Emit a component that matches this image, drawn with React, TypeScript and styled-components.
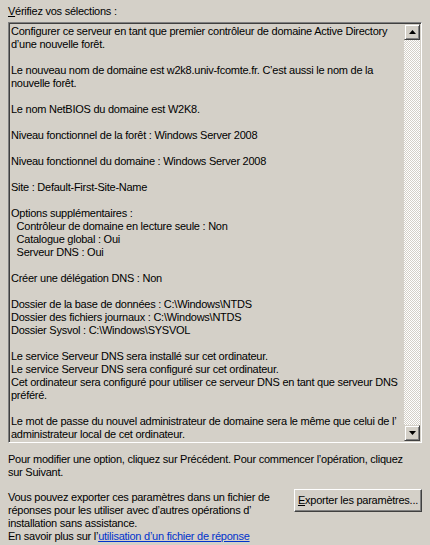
import React from "react";
import styled, { createGlobalStyle } from "styled-components";

const GlobalStyle = createGlobalStyle`
  html, body {
    margin: 0;
    background: #d4d0c8;
  }
  body {
    font-family: "Liberation Sans", Arial, sans-serif;
    font-size: 11px;
    color: #000;
  }
`;

const Dialog = styled.div`
  width: 430px;
  height: 545px;
  box-sizing: border-box;
  padding: 5px 8px 0;
  background: #d4d0c8;
  line-height: 13px;
  letter-spacing: -0.25px;
  overflow: hidden;
`;

const Heading = styled.div`
  margin-bottom: 4px;
  u {
    text-decoration: underline;
  }
`;

const SummaryBox = styled.div`
  display: flex;
  height: 421px;
  box-sizing: border-box;
  border-top: 1px solid #808080;
  border-left: 1px solid #808080;
  border-bottom: 1px solid #ffffff;
  border-right: 1px solid #ffffff;
  box-shadow: inset 1px 1px 0 #404040, inset -1px -1px 0 #d4d0c8;
  padding: 1px;
`;

const SummaryText = styled.div`
  flex: 1;
  overflow: hidden;
  white-space: pre;
  padding: 1px 0 0 1px;
`;

const Scrollbar = styled.div`
  width: 16px;
  display: flex;
  flex-direction: column;
`;

const ArrowButton = styled.div`
  width: 16px;
  height: 16px;
  box-sizing: border-box;
  background: #d4d0c8;
  border-top: 1px solid #d4d0c8;
  border-left: 1px solid #d4d0c8;
  border-bottom: 1px solid #404040;
  border-right: 1px solid #404040;
  box-shadow: inset 1px 1px 0 #ffffff, inset -1px -1px 0 #808080;
  display: flex;
  align-items: center;
  justify-content: center;
`;

const Track = styled.div`
  flex: 1;
  background: repeating-conic-gradient(#ffffff 0 25%, #d4d0c8 0 50%) 0 0 / 2px 2px;
`;

const Note = styled.p`
  margin: 10px 0 0;
  white-space: nowrap;
`;

const ExportRow = styled.div`
  display: flex;
  justify-content: space-between;
  align-items: flex-start;
  margin-top: 10px;
`;

const ExportText = styled.div`
  padding-top: 2px;
  white-space: nowrap;
`;

const Link = styled.a`
  color: #0033cc;
  text-decoration: underline;
  cursor: pointer;
`;

const Button = styled.button`
  font: inherit;
  letter-spacing: inherit;
  white-space: nowrap;
  color: #000;
  width: 128px;
  height: 23px;
  padding: 0;
  background: #d4d0c8;
  border-top: 1px solid #ffffff;
  border-left: 1px solid #ffffff;
  border-bottom: 1px solid #404040;
  border-right: 1px solid #404040;
  box-shadow: inset -1px -1px 0 #808080;
  cursor: pointer;
`;

const Arrow = ({ up }: { up?: boolean }) => (
  <svg width="7" height="4" viewBox="0 0 7 4">
    <path d={up ? "M3.5 0 L7 4 L0 4 Z" : "M0 0 L7 0 L3.5 4 Z"} fill="#000" />
  </svg>
);

const summary = [
  "Configurer ce serveur en tant que premier contrôleur de domaine Active Directory",
  "d’une nouvelle forêt.",
  "",
  "Le nouveau nom de domaine est w2k8.univ-fcomte.fr. C’est aussi le nom de la",
  "nouvelle forêt.",
  "",
  "Le nom NetBIOS du domaine est W2K8.",
  "",
  "Niveau fonctionnel de la forêt : Windows Server 2008",
  "",
  "Niveau fonctionnel du domaine : Windows Server 2008",
  "",
  "Site : Default-First-Site-Name",
  "",
  "Options supplémentaires :",
  "  Contrôleur de domaine en lecture seule : Non",
  "  Catalogue global : Oui",
  "  Serveur DNS : Oui",
  "",
  "Créer une délégation DNS : Non",
  "",
  "Dossier de la base de données : C:\\Windows\\NTDS",
  "Dossier des fichiers journaux : C:\\Windows\\NTDS",
  "Dossier Sysvol : C:\\Windows\\SYSVOL",
  "",
  "Le service Serveur DNS sera installé sur cet ordinateur.",
  "Le service Serveur DNS sera configuré sur cet ordinateur.",
  "Cet ordinateur sera configuré pour utiliser ce serveur DNS en tant que serveur DNS",
  "préféré.",
  "",
  "Le mot de passe du nouvel administrateur de domaine sera le même que celui de l’",
  "administrateur local de cet ordinateur.",
].join("\n");

const App = () => {
  return (
    <Dialog>
      <GlobalStyle />
      <Heading>
        <u>V</u>érifiez vos sélections :
      </Heading>
      <SummaryBox>
        <SummaryText>{summary}</SummaryText>
        <Scrollbar>
          <ArrowButton>
            <Arrow up />
          </ArrowButton>
          <Track />
          <ArrowButton>
            <Arrow />
          </ArrowButton>
        </Scrollbar>
      </SummaryBox>
      <Note>
        Pour modifier une option, cliquez sur Précédent. Pour commencer l’opération, cliquez
        <br />
        sur Suivant.
      </Note>
      <ExportRow>
        <ExportText>
          Vous pouvez exporter ces paramètres dans un fichier de
          <br />
          réponses pour les utiliser avec d’autres opérations d’
          <br />
          installation sans assistance.
          <br />
          En savoir plus sur l’<Link>utilisation d’un fichier de réponse</Link>
        </ExportText>
        <Button>
          <u>E</u>xporter les paramètres...
        </Button>
      </ExportRow>
    </Dialog>
  );
};

export default App;
